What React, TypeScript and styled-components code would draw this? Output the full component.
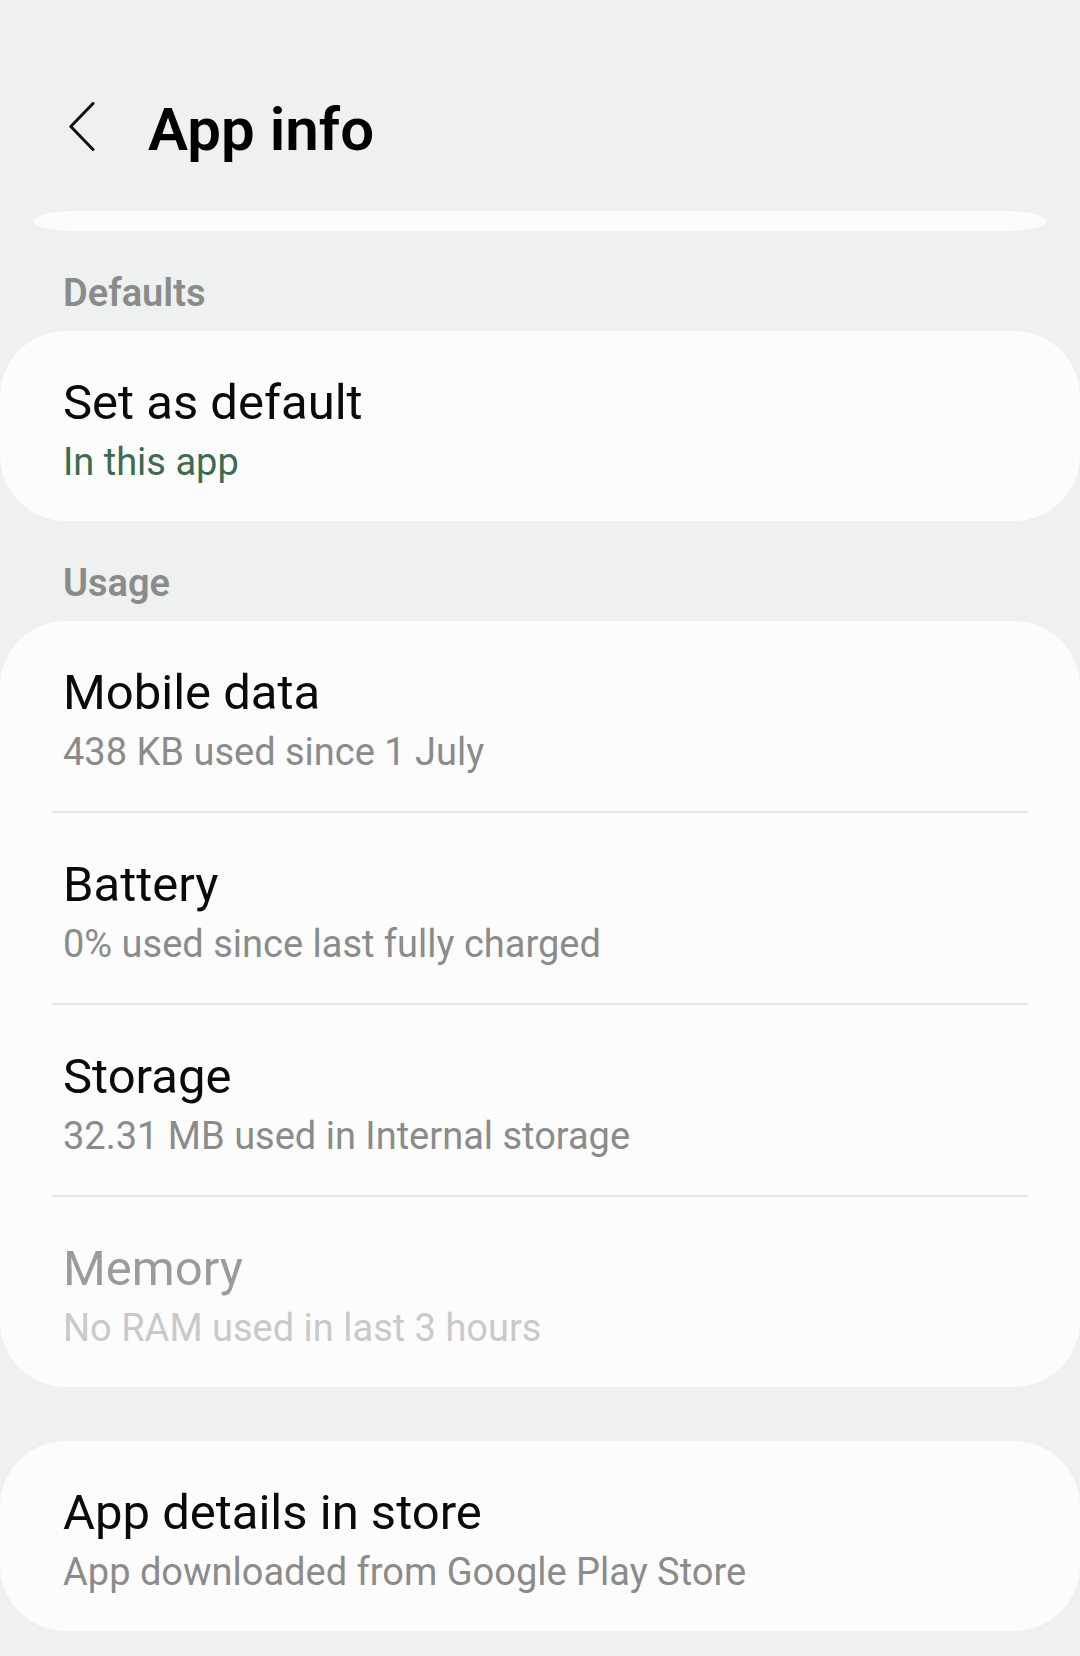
import React from 'react';
import styled, { createGlobalStyle } from 'styled-components';

const GlobalStyle = createGlobalStyle`
  html, body {
    margin: 0;
    padding: 0;
    background: #eef1f0;
  }
  body {
    font-family: Roboto, 'Noto Sans', 'Liberation Sans', sans-serif;
    -webkit-font-smoothing: antialiased;
  }
`;

const Page = styled.div`
  width: 1080px;
  min-height: 1656px;
  background: #eef1f0;
  overflow: hidden;
`;

const TopBar = styled.header`
  display: flex;
  align-items: center;
  gap: 53px;
  padding: 95px 0 0 69px;
  height: 70px;
`;

const BackButton = styled.button`
  display: flex;
  align-items: center;
  justify-content: center;
  width: 26px;
  height: 50px;
  padding: 0;
  border: none;
  background: none;
  margin-top: -6px;
`;

const Title = styled.h1`
  margin: 0;
  font-size: 60px;
  line-height: 70px;
  font-weight: 600;
  color: #000;
`;

const ScrolledEdge = styled.div`
  height: 20px;
  margin: 46px 33px 0 33px;
  background: #fcfcfc;
  border-radius: 42px / 10px;
`;

const SectionLabel = styled.h2`
  margin: 0;
  padding: 39px 63px 15px;
  font-size: 38px;
  line-height: 46px;
  font-weight: 600;
  color: #8b8b8b;
`;

const Card = styled.section<{ $gapTop?: number }>`
  display: flex;
  flex-direction: column;
  background: #fcfcfc;
  border-radius: 66px;
  margin-top: ${(p) => p.$gapTop ?? 0}px;
`;

const Row = styled.div`
  display: flex;
  flex-direction: column;
  gap: 7px;
  padding: 43px 63px 36px;
`;

const Divider = styled.hr`
  margin: 0 52px;
  height: 2px;
  border: none;
  background: #e6e7e7;
`;

const ItemTitle = styled.div<{ $disabled?: boolean }>`
  font-size: 49px;
  line-height: 58px;
  color: ${(p) => (p.$disabled ? '#9b9b9b' : '#0a0a0a')};
`;

const ItemSub = styled.div<{ $tone?: 'green' | 'gray' | 'faint' }>`
  font-size: 38px;
  line-height: 46px;
  color: ${(p) =>
    p.$tone === 'green' ? '#3b6c4d' : p.$tone === 'faint' ? '#c9c9c9' : '#8b8b8b'};
`;

type Item = {
  title: string;
  sub: string;
  tone?: 'green' | 'gray' | 'faint';
  disabled?: boolean;
};

const usage: Item[] = [
  { title: 'Mobile data', sub: '438 KB used since 1 July' },
  { title: 'Battery', sub: '0% used since last fully charged' },
  { title: 'Storage', sub: '32.31 MB used in Internal storage' },
  { title: 'Memory', sub: 'No RAM used in last 3 hours', tone: 'faint', disabled: true },
];

const ListRow: React.FC<{ item: Item }> = ({ item }) => (
  <Row>
    <ItemTitle $disabled={item.disabled}>{item.title}</ItemTitle>
    <ItemSub $tone={item.tone}>{item.sub}</ItemSub>
  </Row>
);

const App: React.FC = () => {
  return (
    <Page>
      <GlobalStyle />
      <TopBar>
        <BackButton aria-label="Back">
          <svg width="26" height="50" viewBox="0 0 26 50" fill="none">
            <polyline
              points="24,1.5 1.8,24.5 24,47.5"
              stroke="#111"
              strokeWidth="3"
              strokeLinecap="round"
              strokeLinejoin="round"
            />
          </svg>
        </BackButton>
        <Title>App info</Title>
      </TopBar>

      <ScrolledEdge />

      <SectionLabel>Defaults</SectionLabel>
      <Card>
        <ListRow item={{ title: 'Set as default', sub: 'In this app', tone: 'green' }} />
      </Card>

      <SectionLabel>Usage</SectionLabel>
      <Card>
        {usage.map((item, i) => (
          <React.Fragment key={item.title}>
            {i > 0 && <Divider />}
            <ListRow item={item} />
          </React.Fragment>
        ))}
      </Card>

      <Card $gapTop={54}>
        <ListRow item={{ title: 'App details in store', sub: 'App downloaded from Google Play Store' }} />
      </Card>
    </Page>
  );
};

export default App;
